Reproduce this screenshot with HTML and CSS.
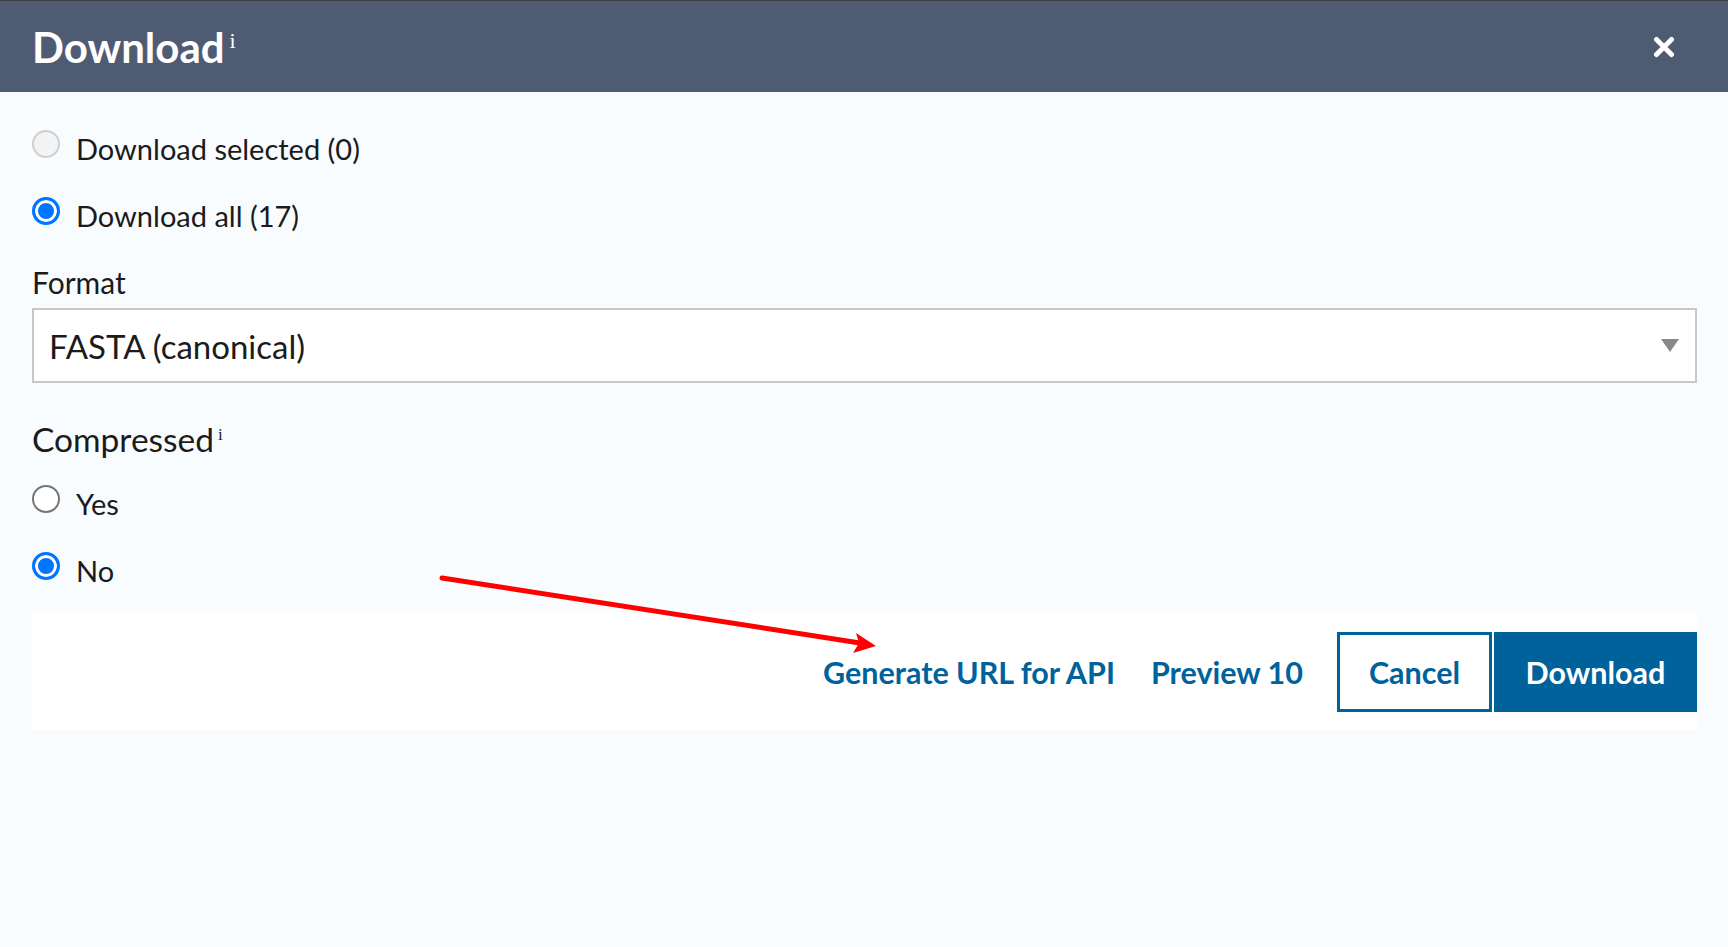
FILE: index.html
```html
<!DOCTYPE html>
<html lang="en">
<head>
    <meta charset="UTF-8">
    <title>Download</title>
    <link rel="stylesheet" href="styles.css">
</head>
<body>

<div class="dialog">
    <div class="dialog-header">
        <h1 class="dialog-title">Download<sup class="info">i</sup></h1>
        <button class="close-button" aria-label="Close">
            <svg width="22" height="22" viewBox="0 0 22 22">
                <path d="M3.5 3.5 L18.5 18.5 M18.5 3.5 L3.5 18.5" stroke="#fff" stroke-width="5" stroke-linecap="round"/>
            </svg>
        </button>
    </div>

    <div class="dialog-body">
        <label class="radio-row">
            <span class="radio disabled"></span>
            <span class="radio-label">Download selected (0)</span>
        </label>
        <label class="radio-row">
            <span class="radio checked"></span>
            <span class="radio-label">Download all (17)</span>
        </label>

        <div class="field-label">Format</div>
        <div class="select-box">
            <span class="select-value">FASTA (canonical)</span>
            <span class="select-arrow"></span>
        </div>

        <div class="section-label">Compressed<sup class="info small">i</sup></div>
        <label class="radio-row">
            <span class="radio"></span>
            <span class="radio-label">Yes</span>
        </label>
        <label class="radio-row">
            <span class="radio checked"></span>
            <span class="radio-label">No</span>
        </label>

        <!-- Actions -->
        <div class="button-bar">
            <a class="link-button api-link" href="#">Generate URL for API</a>
            <a class="link-button" href="#">Preview 10</a>
            <button class="button secondary">Cancel</button>
            <button class="button primary">Download</button>
        </div>
    </div>
</div>

<!-- annotation arrow -->
<svg class="annotation" width="1728" height="947" viewBox="0 0 1728 947">
    <line x1="442" y1="578" x2="860" y2="643" stroke="#f00" stroke-width="5" stroke-linecap="round"/>
    <polygon points="876,646 853,653 859,643 856,633" fill="#f00"/>
</svg>

</body>
</html>
```

FILE: styles.css
```css
body {
    margin: 0;
    padding: 0;
    font-family: Lato, "Noto Sans", sans-serif;
    background-color: #f8fcfe;
    color: #1b1b1b;
    position: relative;
    min-height: 947px;
}
.dialog-header {
    height: 91px;
    border-top: 1px solid #3c3f44;
    background-color: #4f5b73;
    display: flex;
    align-items: center;
    justify-content: space-between;
    padding: 0 53px 0 32px;
}
.dialog-title {
    margin: 0;
    color: #fff;
    font-size: 42px;
    font-weight: 700;
}
.info {
    font-family: "Liberation Serif", serif;
    font-weight: 400;
    font-size: 22px;
    margin-left: 5px;
}
.info.small {
    font-size: 17px;
    margin-left: 4px;
}
.close-button {
    background: none;
    border: none;
    padding: 0;
    display: flex;
    cursor: pointer;
}
.dialog-body {
    padding: 23px 31px 0 32px;
}
.radio-row {
    display: flex;
    align-items: center;
    height: 67px;
    gap: 16px;
    font-size: 29px;
}
.radio {
    width: 28px;
    height: 28px;
    margin-bottom: 10px;
    box-sizing: border-box;
    border-radius: 50%;
    border: 2px solid #767676;
    background: #fff;
    flex-shrink: 0;
}
.radio.disabled {
    border-color: #cfcfcf;
    background: #f3f3f3;
}
.radio.checked {
    border: 3px solid #0075ff;
    background: #0075ff;
    box-shadow: inset 0 0 0 3px #fff;
}
.field-label {
    font-size: 30px;
    margin-top: 15px;
    margin-bottom: 8px;
}
.select-box {
    height: 75px;
    box-sizing: border-box;
    border: 2px solid #c8c8c8;
    background: #fff;
    display: flex;
    align-items: center;
    justify-content: space-between;
    padding: 0 16px 0 15px;
    font-size: 33px;
}
.select-arrow {
    width: 0;
    height: 0;
    border-left: 9px solid transparent;
    border-right: 9px solid transparent;
    border-top: 13px solid #888;
}
.section-label {
    font-size: 33.5px;
    margin-top: 36px;
    margin-bottom: 11px;
}
.button-bar {
    margin-top: 9px;
    height: 117px;
    background: #fff;
    display: flex;
    align-items: center;
    justify-content: flex-end;
}
.link-button {
    color: #00629b;
    font-weight: 700;
    font-size: 30.5px;
    text-decoration: none;
    margin-right: 34px;
}
.link-button.api-link {
    margin-right: 36px;
}
.button {
    height: 80px;
    font-family: inherit;
    font-size: 30.5px;
    font-weight: 700;
    cursor: pointer;
}
.button.secondary {
    width: 155px;
    background: #fff;
    color: #00629b;
    border: 3px solid #00629b;
    margin-right: 2px;
}
.button.primary {
    width: 203px;
    background: #00629b;
    color: #fff;
    border: none;
}
.annotation {
    position: absolute;
    top: 0;
    left: 0;
    pointer-events: none;
}
```
